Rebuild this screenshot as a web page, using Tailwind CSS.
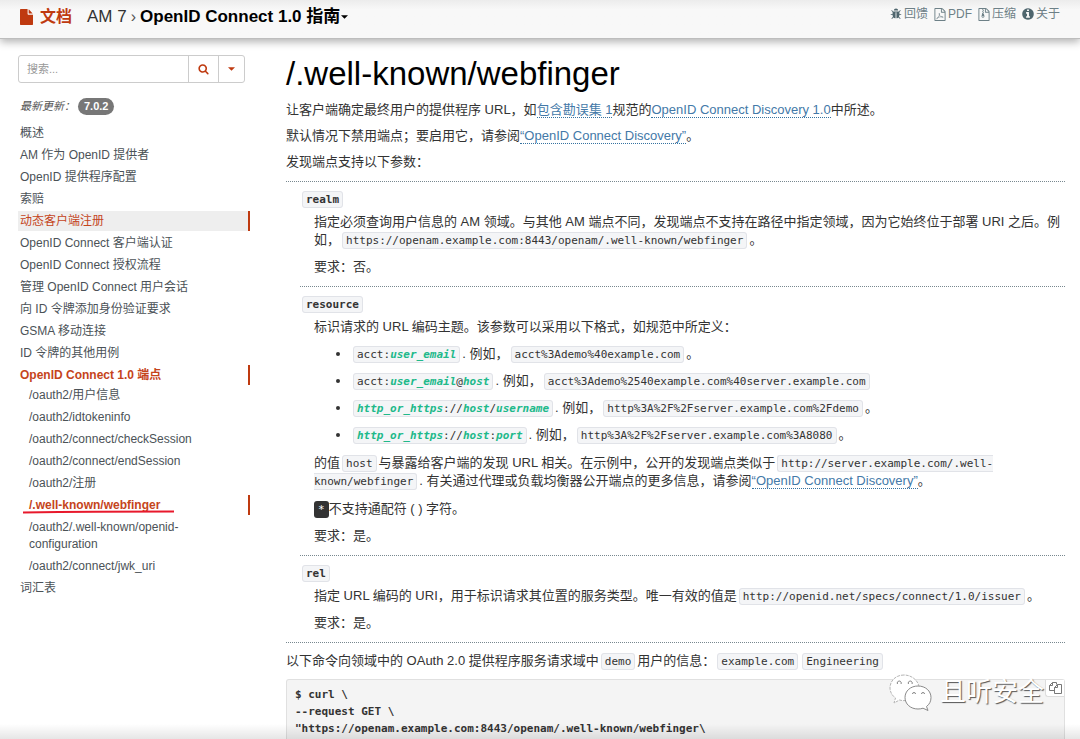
<!DOCTYPE html>
<html lang="zh-CN">
<head>
<meta charset="utf-8">
<meta name="viewport" content="width=device-width, initial-scale=1">
<title>/.well-known/webfinger</title>
<script src="https://cdn.jsdelivr.net/npm/@tailwindcss/browser@4"></script>
</head>
<body class="bg-white">
<div class="relative flex h-screen flex-col overflow-hidden font-['Liberation_Sans','Noto_Sans_CJK_SC',sans-serif] text-[13px] leading-[18px] text-[#333]">

  <header class="relative flex h-[39px] shrink-0 items-start justify-between border-b border-[#bdbdbd] bg-linear-to-b from-[#ececec] via-[#f8f8f8] via-25% to-[#f8f8f8] pr-5 pl-5 shadow-[0_3px_8px_rgba(0,0,0,0.3)]">
    <div class="flex h-[34px] items-center text-[16px] leading-[20px]">
      <a href="#" class="flex items-center gap-[7px] font-bold text-[#bf3a10]">
        <svg class="h-4 w-[13px]" viewBox="128 0 1536 1792" preserveAspectRatio="none" fill="currentColor" aria-hidden="true"><path d="M1152 512v-472q22 14 36 28l408 408q14 14 28 36h-472zm-128 32q0 40 28 68t68 28h544v1056q0 40-28 68t-68 28h-1344q-40 0-68-28t-28-68v-1600q0-40 28-68t68-28h800v544z"/></svg>
        文档
      </a>
      <a href="#" class="ml-[15px] text-[17px] text-[#333]">AM 7</a>
      <span class="mx-1 text-[#555]">›</span>
      <button type="button" class="flex items-center gap-px text-[17px] font-bold text-black">OpenID Connect 1.0 指南
        <svg class="h-1 w-[7px]" viewBox="0 0 8 4" fill="currentColor" aria-hidden="true"><path d="M0 0h8L4 4z"/></svg>
      </button>
    </div>
    <nav class="flex h-7 items-center gap-[6px] text-[12px] text-[#6d8087]">
      <a href="#" class="flex items-center gap-[2px]">
        <svg class="size-3 text-[#4f666e]" viewBox="0 0 1792 1792" fill="currentColor" aria-hidden="true"><path d="M1696 960q0 26-19 45t-45 19h-224q0 171-67 290l208 209q19 19 19 45t-19 45q-18 19-45 19t-45-19l-198-197q-5 5-15 13t-42 28.500-65 36.500-82 29-97 13v-896h-128v896q-51 0-101.500-13.500t-87-33-66-39-43.500-32.500l-15-14-183 207q-20 21-48 21-24 0-43-16-19-18-20.500-44.500t15.500-46.500l202-227q-58-114-58-274h-224q-26 0-45-19t-19-45 19-45 45-19h224v-294l-173-173q-19-19-19-45t19-45 45-19 45 19l173 173h844l173-173q19-19 45-19t45 19 19 45-19 45l-173 173v294h224q26 0 45 19t19 45zm-480-576h-640q0-133 93.500-226.500t226.500-93.500 226.500 93.500 93.500 226.500z"/></svg>回馈</a>
      <a href="#" class="flex items-center gap-[2px]">
        <svg class="h-[13px] w-3" viewBox="128 0 1536 1792" fill="currentColor" aria-hidden="true"><path d="M1596 380q28 28 48 76t20 88v1152q0 40-28 68t-68 28h-1344q-40 0-68-28t-28-68v-1600q0-40 28-68t68-28h896q40 0 88 20t76 48zm-444-244v376h376q-10-29-22-41l-313-313q-12-12-41-22zm384 1528v-1024h-416q-40 0-68-28t-28-68v-416h-768v1536h1280z"/><path d="M430 1500Q640 1380 800 1010Q880 780 800 720Q720 790 830 990Q960 1230 1320 1300Q1380 1200 1190 1190Q760 1200 480 1400Z" fill="none" stroke="currentColor" stroke-width="75"/></svg>PDF</a>
      <a href="#" class="flex items-center gap-[2px]">
        <svg class="h-[13px] w-3" viewBox="128 0 1536 1792" fill="currentColor" aria-hidden="true"><path d="M1596 380q28 28 48 76t20 88v1152q0 40-28 68t-68 28h-1344q-40 0-68-28t-28-68v-1600q0-40 28-68t68-28h896q40 0 88 20t76 48zm-444-244v376h376q-10-29-22-41l-313-313q-12-12-41-22zm384 1528v-1024h-416q-40 0-68-28t-28-68v-416h-768v1536h1280z"/><path d="M640 128h128v128H640zM768 256h128v128H768zM640 384h128v128H640zM768 512h128v128H768zM640 640h128v128h100l84 350c30 130-80 220-200 220s-220-90-190-220l78-350zM752 1100c-70 0-110 30-110 65s40 65 110 65 110-30 110-65-40-65-110-65z" fill-rule="evenodd"/></svg>压缩</a>
      <a href="#" class="flex items-center gap-[2px]">
        <svg class="size-3 text-[#4f666e]" viewBox="100 100 1592 1592" fill="currentColor" aria-hidden="true"><path d="M1152 1376v-160q0-14-9-23t-23-9h-96v-512q0-14-9-23t-23-9h-320q-14 0-23 9t-9 23v160q0 14 9 23t23 9h96v320h-96q-14 0-23 9t-9 23v160q0 14 9 23t23 9h448q14 0 23-9t9-23zm-128-896v-160q0-14-9-23t-23-9h-192q-14 0-23 9t-9 23v160q0 14 9 23t23 9h192q14 0 23-9t9-23zm640 416q0 209-103 385.500t-279.500 279.500-385.500 103-385.500-103-279.500-279.500-103-385.500 103-385.500 279.500-279.500 385.500-103 385.500 103 279.500 279.500 103 385.500z"/></svg>关于</a>
    </nav>
  </header>

  <div class="flex min-h-0 flex-1 pr-[15px] pl-[18px]">
    <aside class="mr-9 w-[232px] shrink-0 pt-4 text-[12px] text-[#4b5257]">
      <form class="mr-[5px] flex h-7 rounded-[3px] border border-[#ccc]" onsubmit="return false">
        <label for="q" class="sr-only">搜索</label>
        <input id="q" type="text" placeholder="搜索..." class="h-full min-w-0 flex-1 px-2 text-[11px] leading-[24px] placeholder:text-[#999]">
        <button type="submit" aria-label="搜索" class="flex w-[30px] items-center justify-center border-l border-[#ccc] text-[#bf3a10]">
          <svg class="size-[11px]" viewBox="0 100 1792 1792" fill="currentColor" aria-hidden="true"><path d="M1216 832q0-185-131.500-316.500t-316.500-131.500-316.500 131.500-131.500 316.500 131.500 316.500 316.500 131.500 316.500-131.500 131.500-316.500zm512 832q0 52-38 90t-90 38q-54 0-90-38l-343-342q-179 124-399 124-143 0-273.500-55.500t-225-150-150-225-55.500-273.500 55.500-273.500 150-225 225-150 273.500-55.500 273.500 55.500 225 150 150 225 55.500 273.500q0 220-124 399l343 343q37 37 37 90z"/></svg>
        </button>
        <button type="button" aria-label="搜索选项" class="flex w-[26px] items-center justify-center border-l border-[#ccc] text-[#bf3a10]">
          <svg class="h-1 w-[7px]" viewBox="0 0 8 4" fill="currentColor" aria-hidden="true"><path d="M0 0h8L4 4z"/></svg>
        </button>
      </form>
      <p class="mt-[14px] flex h-[18px] items-center pl-[2px] text-[11px] italic text-[#555]">最新更新： <span class="ml-[3px] rounded-full bg-[#777] px-[6px] text-[11px] leading-[17px] font-bold not-italic text-white">7.0.2</span></p>
      <ul class="mt-2 flex flex-col gap-[2px] leading-[17px] *:pt-[2px] *:pb-px *:pl-[2px]">
        <li><a href="#">概述</a></li>
        <li><a href="#">AM 作为 OpenID 提供者</a></li>
        <li><a href="#">OpenID 提供程序配置</a></li>
        <li><a href="#">索赔</a></li>
        <li class="border-r-2 border-[#bf3a10] bg-[#eee] text-[#c5441b]"><a href="#">动态客户端注册</a></li>
        <li><a href="#">OpenID Connect 客户端认证</a></li>
        <li><a href="#">OpenID Connect 授权流程</a></li>
        <li><a href="#">管理 OpenID Connect 用户会话</a></li>
        <li><a href="#">向 ID 令牌添加身份验证要求</a></li>
        <li><a href="#">GSMA 移动连接</a></li>
        <li><a href="#">ID 令牌的其他用例</a></li>
        <li class="border-r-2 border-[#bf3a10] font-bold text-[#c5441b]"><a href="#">OpenID Connect 1.0 端点</a></li>
      </ul>
      <ul class="flex flex-col gap-[2px] leading-[17px] *:pt-[2px] *:pb-px *:pl-[11px]">
        <li><a href="#">/oauth2/用户信息</a></li>
        <li><a href="#">/oauth2/idtokeninfo</a></li>
        <li><a href="#">/oauth2/connect/checkSession</a></li>
        <li><a href="#">/oauth2/connect/endSession</a></li>
        <li><a href="#">/oauth2/注册</a></li>
        <li class="relative border-r-2 border-[#bf3a10] font-bold text-[#c5441b]"><a href="#">/.well-known/webfinger</a>
          <svg class="absolute top-[15px] left-[5px] h-1 w-[152px]" viewBox="0 0 152 4" aria-hidden="true"><path d="M0 2.500Q70 1.500 151 1.500" fill="none" stroke="#e8192c" stroke-width="2"/></svg>
        </li>
        <li class="pr-12"><a href="#">/oauth2/.well-known/openid-configuration</a></li>
        <li><a href="#">/oauth2/connect/jwk_uri</a></li>
      </ul>
      <p class="pt-[3px] pl-[2px]"><a href="#">词汇表</a></p>
    </aside>

    <main class="flex min-w-0 flex-1 flex-col pt-4 [&_a]:border-b [&_a]:border-dotted [&_a]:border-[#3572a0] [&_a]:text-[#4379a8] [&_code]:mx-[2px] [&_code]:rounded-[3px] [&_code]:border [&_code]:border-[#e1e3e8] [&_code]:bg-[#f4f5f7] [&_code]:px-[3px] [&_code]:py-px [&_code]:font-['DejaVu_Sans_Mono',monospace] [&_code]:text-[11px] [&_code]:leading-[12px] [&_em]:font-bold [&_em]:text-[#21b98a]">
      <h1 class="text-[33px] leading-[38px] text-black">/.well-known/webfinger</h1>
      <p class="mt-2">让客户端确定最终用户的提供程序 URL，如<a href="#">包含勘误集 1</a>规范的<a href="#">OpenID Connect Discovery 1.0</a>中所述。</p>
      <p class="mt-2">默认情况下禁用端点；要启用它，请参阅<a href="#">“OpenID Connect Discovery”</a>。</p>
      <p class="mt-2">发现端点支持以下参数：</p>

      <dl class="mt-[10px] border-y border-dotted border-[#78888f] [&_dd]:pl-[14px] [&_dt]:font-bold">
        <div class="ml-[14px] pt-2 pb-[10px]">
          <dt><code>realm</code></dt>
          <dd class="mt-[5px]">
            <p>指定必须查询用户信息的 AM 领域。与其他 AM 端点不同，发现端点不支持在路径中指定领域，因为它始终位于部署 URI 之后。例如，<code>https://openam.example.com:8443/openam/.well-known/webfinger</code>。</p>
            <p class="mt-[9px]">要求：否。</p>
          </dd>
        </div>
        <div class="ml-[14px] border-t border-dotted border-[#78888f] pt-2 pb-[10px]">
          <dt><code>resource</code></dt>
          <dd class="mt-[5px]">
            <p>标识请求的 URL 编码主题。该参数可以采用以下格式，如规范中所定义：</p>
            <ul class="mt-[9px] flex list-disc flex-col gap-[9px] pl-[37px]">
              <li><code>acct:<em>user_email</em></code>. 例如，<code>acct%3Ademo%40example.com</code>。</li>
              <li><code>acct:<em>user_email</em>@<em>host</em></code>. 例如，<code>acct%3Ademo%2540example.com%40server.example.com</code></li>
              <li><code><em>http_or_https</em>://<em>host</em>/<em>username</em></code>. 例如，<code>http%3A%2F%2Fserver.example.com%2Fdemo</code>。</li>
              <li><code><em>http_or_https</em>://<em>host</em>:<em>port</em></code>. 例如，<code>http%3A%2F%2Fserver.example.com%3A8080</code>。</li>
            </ul>
            <p class="mt-[10px]">的值<code>host</code>与暴露给客户端的发现 URL 相关。在示例中，公开的发现端点类似于<code>http://server.example.com/.well-known/webfinger</code>. 有关通过代理或负载均衡器公开端点的更多信息，请参阅<a href="#">“OpenID Connect Discovery”</a>。</p>
            <p class="mt-[10px]"><kbd class="rounded-[3px] bg-[#333] px-1 py-[2px] font-['DejaVu_Sans_Mono',monospace] text-[11px] leading-[12px] text-white">*</kbd>不支持通配符 ( ) 字符。</p>
            <p class="mt-[9px]">要求：是。</p>
          </dd>
        </div>
        <div class="ml-[14px] border-t border-dotted border-[#78888f] pt-2 pb-[10px]">
          <dt><code>rel</code></dt>
          <dd class="mt-[5px]">
            <p>指定 URL 编码的 URI，用于标识请求其位置的服务类型。唯一有效的值是<code>http://openid.net/specs/connect/1.0/issuer</code>。</p>
            <p class="mt-[9px]">要求：是。</p>
          </dd>
        </div>
      </dl>

      <p class="mt-[9px]">以下命令向领域中的 OAuth 2.0 提供程序服务请求域中<code>demo</code>用户的信息：<code>example.com</code><code>Engineering</code></p>
      <div class="relative mt-[9px] min-h-0 flex-1 rounded-t-[3px] border border-b-0 border-[#e0e0e0] bg-[#f4f4f4]">
        <pre class="px-2 pt-[6px] font-['DejaVu_Sans_Mono',monospace] text-[11px] leading-[17px] font-bold">$ curl \
--request GET \
"https://openam.example.com:8443/openam/.well-known/webfinger\</pre>
        <button type="button" aria-label="复制" class="absolute top-0 right-0 flex h-[17px] w-[19px] items-center justify-center rounded-bl-[3px] border-b border-l border-[#ddd] bg-white text-[#777]">
          <svg class="size-[13px]" viewBox="0 0 13 13" fill="none" stroke="currentColor" aria-hidden="true"><path d="M5.500 8.500h-5v-5l3-3h4v2M3.500 .5v3h-3M5.500 5.500l3-3h4v9h-7zM8.500 2.500v3h-3"/></svg>
        </button>
        <div class="absolute right-5 -top-[7px] flex items-center gap-2">
          <svg class="h-[37px] w-[43px]" viewBox="0 0 43 37" fill="#fff" aria-hidden="true">
            <path d="M15 1C7 1 1 6.500 1 14c0 4 2 7.500 5.500 10L5 29l5.500-3c2 .6 4 .8 6 .5C25 26 30 21 30 14S23 1 15 1z" stroke="#b5b5b5" stroke-dasharray="3 1"/>
            <path d="M29 12c-7.500 0-13 5-13 11.500S21.500 35 29 35c2 0 3.500-.3 5-.8l5 2.300-1.500-4c3-2.200 4.500-5.200 4.500-9C42 17 36.500 12 29 12z" stroke="#8a8a8a"/>
            <path d="M8.500 10a2 2 0 1 1 3.500 0M19.500 10a2 2 0 1 1 3.500 0M23.500 20a1.500 1.500 0 1 1 3 0M32.500 20a1.500 1.500 0 1 1 3 0" fill="none" stroke="#858585"/>
          </svg>
          <span class="text-[26px] leading-[38px] text-white text-shadow-[1px_1px_1px_#555]">且听安全</span>
        </div>
      </div>
    </main>
  </div>

  <div class="pointer-events-none absolute inset-x-0 bottom-0 h-[15px] bg-linear-to-b from-black/0 to-black/10"></div>
</div>
</body>
</html>
